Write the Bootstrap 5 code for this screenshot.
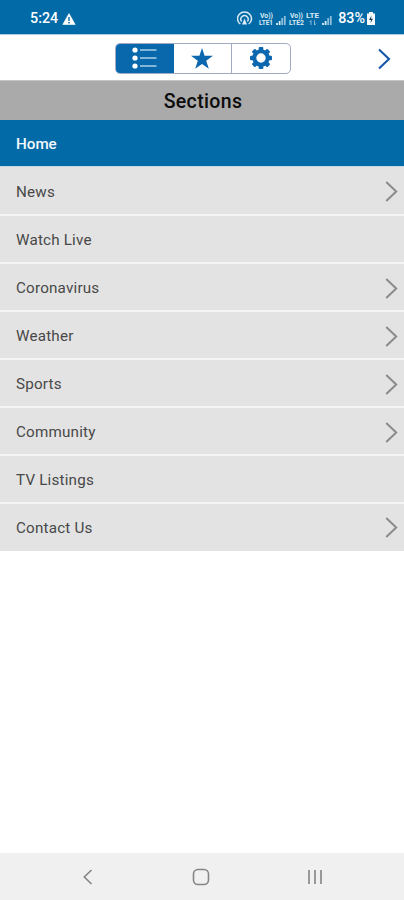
<!DOCTYPE html>
<html lang="en">
<head>
<meta charset="utf-8">
<meta name="viewport" content="width=device-width, initial-scale=1">
<title>Sections</title>
<link href="https://cdn.jsdelivr.net/npm/bootstrap@5.3.0/dist/css/bootstrap.min.css" rel="stylesheet">
<style>
  :root { --brand: #026aa7; }
  body { font-family: Roboto, "Liberation Sans", sans-serif; height: 900px; overflow: hidden; }
  svg { display: block; flex: none; }
  .status-bar { height: 35px; background: var(--brand); border-bottom: 1px solid #a9cce0; padding: 3px 28px 0 30px; font-size: 14.300px; font-weight: 500; }
  .battery-level { margin: 0 1px 0 4px; }
  .toolbar { height: 45px; display: grid; grid-template-columns: 1fr 176px 1fr; padding: 1px 13px 0 14px; }
  .tabs { grid-column: 2; height: 31px; border: 1px solid #a3abc4; border-radius: 5px; overflow: hidden; }
  .tabs > a { width: 58px; flex: 1 1 0; border-right: 1px solid #a3abc4; color: #0c68ae; }
  .tabs > a:last-child { border-right: 0; }
  .tabs > .current { background: #0968ab; color: #e4f1fa; border-color: #0968ab; }
  .next-link { color: #1556a8; padding-top: 2px; }
  .section-title { height: 40px; background: #aaa; border-top: 1px solid #c5c5c5; font-size: 19.5px; font-weight: 500; color: #0c0c0c; letter-spacing: .35px; line-height: 41px; margin: 0; padding-left: 2px; }
  .menu .list-group-item { height: 48px; padding: 3px 6px 0 16px; background: #e3e3e3; color: #484848; font-size: 15.200px; letter-spacing: .2px; border: 0 solid #f4f4f4; border-bottom-width: 2px; }
  .menu .list-group-item svg { margin-top: -1px; }
  .menu .list-group-item.active { height: 47px; background: var(--brand); color: #f2f8fc; font-weight: 500; border-color: #c5d8e2; border-bottom-width: 1px; margin: 0; letter-spacing: 0; }
  .menu .list-group-item.active + .list-group-item { height: 49px; }
  .menu .list-group-item:last-child { height: 47px; border-bottom: 0; padding-top: 1px; }
  .system-nav { height: 47px; background: #f0f0f0; padding: 0 81px 0 82px; }
</style>
<script src="https://cdn.jsdelivr.net/npm/bootstrap@5.3.0/dist/js/bootstrap.bundle.min.js"></script>
</head>
<body class="d-flex flex-column bg-white">
  <svg width="0" height="0" class="position-absolute" aria-hidden="true">
    <symbol id="chevron" viewBox="0 0 12 20"><path d="M1 1l9.500 9L1 19" fill="none" stroke="currentColor" stroke-width="1.900"/></symbol>
  </svg>

  <header class="status-bar d-flex align-items-center text-white">
    <span>5:24</span>
    <svg class="ms-1" width="14" height="12" viewBox="0 0 14 12"><path d="M7 .5 13.2 11.5H.8z" fill="#fff" stroke="#fff" stroke-width=".6" stroke-linejoin="round"/><path d="M7 4v4M7 9v1.500" stroke="#026aa7" stroke-width="1.400"/></svg>
    <svg class="ms-auto" width="97" height="18" viewBox="237 9 97 18" fill="none" stroke="#dcebf5">
      <g stroke-width="1.500"><path d="M240.300 23a7 6.600 0 1 1 8.400 0"/><path d="M241.600 20.500a3.800 3.500 0 1 1 5.800 0"/></g>
      <path d="M244.500 17.500l-2.500 6h5z" fill="#dcebf5" stroke="none"/>
      <g fill="#dcebf5" stroke="none" font-family="Roboto, sans-serif" font-weight="700" font-size="6.500">
        <text x="260" y="16.500" textLength="13" lengthAdjust="spacingAndGlyphs">Vo))</text>
        <text x="259" y="24.300" textLength="14" lengthAdjust="spacingAndGlyphs">LTE1</text>
        <text x="290" y="16.500" textLength="13" lengthAdjust="spacingAndGlyphs">Vo))</text>
        <text x="289" y="24.300" textLength="15" lengthAdjust="spacingAndGlyphs">LTE2</text>
        <text x="306" y="17" textLength="13" lengthAdjust="spacingAndGlyphs">LTE</text>
      </g>
      <path d="M311 24v-4.500l-1.500 1.500M314.500 19.500v4.500l1.500-1.500" stroke-width=".9" opacity=".7"/>
      <g stroke-width="1.800"><path d="M277 24v-2M279.600 24v-4M323 24v-2M325.600 24v-4"/><path d="M282.200 24v-7M284.800 24v-9M328.200 24v-7M330.800 24v-9" opacity=".65"/></g>
    </svg>
    <span class="battery-level">83%</span>
    <svg width="10" height="14" viewBox="0 0 10 14"><path d="M3 0h4v1.500h2V13H1V1.500h2z" fill="#f4f9fc"/><path d="M5.500 3.500 3 8h2l-.5 3L7 6.800H5z" fill="#153e5c"/></svg>
  </header>

  <div class="toolbar align-items-center">
    <nav class="tabs d-flex" aria-label="Views">
      <a href="#" class="current d-flex align-items-center justify-content-center" aria-label="Sections">
        <svg width="26" height="22" viewBox="0 0 26 22"><g fill="#fff"><circle cx="4" cy="3" r="2.600"/><circle cx="4" cy="11" r="2.600"/><circle cx="4" cy="19" r="2.600"/></g><path d="M9 3H25.500M9 11H25.500M9 19H25.500" stroke="#a9d0ec" stroke-width="1.600"/></svg>
      </a>
      <a href="#" class="d-flex align-items-center justify-content-center" aria-label="Favorites">
        <svg width="22" height="21" viewBox="0 0 22 21"><path fill="currentColor" d="M11 0l2.600 7.800H22l-6.800 4.900 2.600 8.100L11 15.900l-6.800 4.900 2.600-8.100L0 7.800h8.400z"/></svg>
      </a>
      <a href="#" class="d-flex align-items-center justify-content-center" aria-label="Settings">
        <svg width="22" height="22" viewBox="-11 -11 22 22"><g fill="currentColor"><g id="teeth"><rect x="-2.300" y="-11" width="4.600" height="5.500" rx="1"/><rect x="-2.300" y="5.500" width="4.600" height="5.500" rx="1"/><rect x="-11" y="-2.300" width="5.500" height="4.600" rx="1"/><rect x="5.500" y="-2.300" width="5.500" height="4.600" rx="1"/></g><use href="#teeth" transform="rotate(45)"/></g><circle r="6.700" fill="none" stroke="currentColor" stroke-width="4"/></svg>
      </a>
    </nav>
    <a href="#" class="next-link ms-auto" aria-label="Next"><svg width="14" height="22" viewBox="0 0 14 22"><path d="M2 1.500 12 11 2 20.500" fill="none" stroke="currentColor" stroke-width="2.100"/></svg></a>
  </div>

  <h1 class="section-title text-center">Sections</h1>

  <nav class="menu list-group list-group-flush rounded-0">
    <a href="#" class="list-group-item active d-flex align-items-center">Home</a>
    <a href="#" class="list-group-item d-flex align-items-center justify-content-between">News<svg width="13" height="21" color="#8b8b8b"><use href="#chevron"/></svg></a>
    <a href="#" class="list-group-item d-flex align-items-center">Watch Live</a>
    <a href="#" class="list-group-item d-flex align-items-center justify-content-between">Coronavirus<svg width="13" height="21" color="#8b8b8b"><use href="#chevron"/></svg></a>
    <a href="#" class="list-group-item d-flex align-items-center justify-content-between">Weather<svg width="13" height="21" color="#8b8b8b"><use href="#chevron"/></svg></a>
    <a href="#" class="list-group-item d-flex align-items-center justify-content-between">Sports<svg width="13" height="21" color="#8b8b8b"><use href="#chevron"/></svg></a>
    <a href="#" class="list-group-item d-flex align-items-center justify-content-between">Community<svg width="13" height="21" color="#8b8b8b"><use href="#chevron"/></svg></a>
    <a href="#" class="list-group-item d-flex align-items-center">TV Listings</a>
    <a href="#" class="list-group-item d-flex align-items-center justify-content-between">Contact Us<svg width="13" height="21" color="#8b8b8b"><use href="#chevron"/></svg></a>
  </nav>

  <footer class="system-nav mt-auto d-flex align-items-center justify-content-between">
    <svg width="12" height="18" viewBox="0 0 12 18" fill="none" stroke="#858585" stroke-width="1.600"><path d="M9.500 2 2.300 9l7.200 7"/></svg>
    <svg width="18" height="18" viewBox="0 0 18 18" fill="none" stroke="#858585" stroke-width="1.600"><rect x="1.500" y="1.500" width="15" height="15" rx="4.500"/></svg>
    <svg width="16" height="16" viewBox="0 0 16 16" stroke="#8a8a8a" stroke-width="1.700"><path d="M2 1v14M8 1v14M14 1v14"/></svg>
  </footer>
</body>
</html>
